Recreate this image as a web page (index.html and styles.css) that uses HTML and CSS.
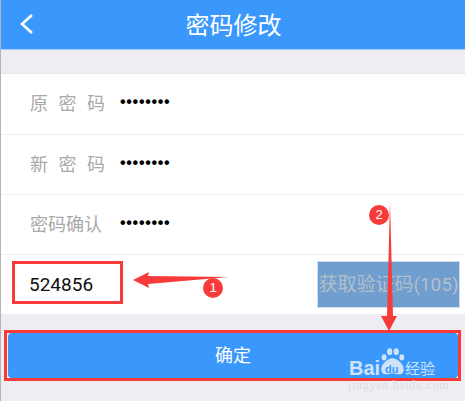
FILE: index.html
```html
<!DOCTYPE html>
<html lang="zh-CN">
<head>
  <meta charset="UTF-8">
  <title>密码修改</title>
  <link rel="stylesheet" href="styles.css">
</head>
<body>

  <div class="page">
    <div class="header">
      <svg class="back" width="16" height="22" viewBox="0 0 16 22">
        <path d="M13 2 L3 11 L13 20" fill="none" stroke="#fff" stroke-width="2.6"/>
      </svg>
      <h1>密码修改</h1>
    </div>

    <div class="form">
      <div class="row">
        <span class="label spaced">原密码</span>
        <span class="dots">••••••••</span>
      </div>
      <div class="row">
        <span class="label spaced">新密码</span>
        <span class="dots">••••••••</span>
      </div>
      <div class="row">
        <span class="label">密码确认</span>
        <span class="dots">••••••••</span>
      </div>
      <div class="row code-row">
        <span class="code">524856</span>
        <button class="get-code">获取验证码(105)</button>
      </div>
    </div>

    <button class="submit">确定</button>
  </div>

  <!-- annotations drawn over the screenshot -->
  <div class="mark mark-code"></div>
  <div class="mark mark-submit"></div>

  <svg class="arrows" width="465" height="401" viewBox="0 0 465 401">
    <path d="M133 280 L149 272 L148 276 L229 277 L148 284 L149 288 Z" fill="#f73b3b"/>
    <path d="M390 201 L393 316 L397 316 L389 331 L381 316 L387 316 Z" fill="#f73b3b"/>
  </svg>
  <div class="badge badge-one">1</div>
  <div class="badge badge-two">2</div>

  <div class="watermark">
    <svg class="paw" width="27" height="28" viewBox="0 0 28 30">
      <ellipse cx="5" cy="10" rx="2.6" ry="3.4" fill="#cfe3f8"/>
      <ellipse cx="11" cy="4" rx="2.8" ry="3.6" fill="#cfe3f8"/>
      <ellipse cx="18" cy="4" rx="2.8" ry="3.6" fill="#cfe3f8"/>
      <ellipse cx="24" cy="10" rx="2.6" ry="3.4" fill="#cfe3f8"/>
      <path d="M14 11 C19 11 27 18 26 24 C25 30 18 28 14 27 C10 28 3 30 2 24 C1 18 9 11 14 11 Z" fill="#cfe3f8"/>
    </svg>
    <span class="wm-bai">Bai</span>
    <span class="wm-du">du</span>
    <span class="wm-jy">经验</span>
    <span class="wm-url">jingyan.baidu.com</span>
  </div>

</body>
</html>
```

FILE: styles.css
```css
html, body {
  margin: 0;
  height: 100%;
}
body {
  font-family: "Liberation Sans", "Noto Sans CJK SC", sans-serif;
  background: #eeeef2;
  overflow: hidden;
}
.page {
  height: 401px;
  border-left: 1px solid #b4b4b4;
  box-sizing: border-box;
}
.header {
  height: 49px;
  background: #3a98fd;
  border-bottom: 1px solid #a5cffb;
  display: flex;
  align-items: center;
  justify-content: center;
  padding-left: 1px;
}
.back {
  position: absolute;
  left: 19px;
  top: 13px;
}
h1 {
  margin: 0 0 2px;
  font-size: 24px;
  font-weight: normal;
  color: #fff;
  font-family: "Noto Sans CJK SC", sans-serif;
}
.form {
  margin-top: 23px;
  background: #fff;
  border-top: 1px solid #e9e9ec;
}
.row {
  height: 59px;
  display: flex;
  align-items: center;
  padding-left: 29px;
  border-bottom: 1px solid #efeff1;
}
.row:first-child {
  height: 60px;
}
.label {
  width: 90px;
  padding-bottom: 4px;
  font-size: 18px;
  color: #a9a9a9;
  font-family: "Noto Sans CJK SC", sans-serif;
}
.spaced {
  letter-spacing: 10.5px;
}
.dots {
  margin-bottom: 4px;
  font-size: 16px;
  letter-spacing: 0.7px;
  color: #000;
  font-weight: bold;
}
.code-row {
  justify-content: space-between;
  padding-right: 5px;
}
.code {
  margin-left: -1px;
  font-family: Roboto, sans-serif;
  font-size: 19px;
  color: #111;
}
.get-code {
  width: 143px;
  height: 47px;
  padding: 0 0 4px;
  border: 1px solid #cfdcea;
  background: #6f9ecf;
  color: #b5bfca;
  font-family: Roboto, "Noto Sans CJK SC", sans-serif;
  font-size: 19px;
  white-space: nowrap;
}
.submit {
  display: block;
  width: 450px;
  height: 45px;
  margin: 18px 0 0 7px;
  padding: 0 0 4px;
  border: 0;
  border-radius: 4px;
  background: #3a98fd;
  color: #fff;
  font-size: 18px;
  font-family: "Noto Sans CJK SC", sans-serif;
}
.mark {
  position: absolute;
  border: 3px solid #f73b3b;
  box-sizing: border-box;
}
.mark-code {
  left: 12px;
  top: 261px;
  width: 111px;
  height: 43px;
}
.mark-submit {
  left: 4px;
  top: 330px;
  width: 457px;
  height: 51px;
}
.arrows {
  position: absolute;
  left: 0;
  top: 0;
}
.badge {
  position: absolute;
  width: 20px;
  height: 20px;
  border-radius: 50%;
  background: #f73b3b;
  color: #fff;
  font-size: 13px;
  line-height: 20px;
  text-align: center;
}
.badge-one {
  left: 203px;
  top: 278px;
}
.badge-two {
  left: 369px;
  top: 205px;
}
.watermark {
  position: absolute;
  left: 348px;
  top: 347px;
  width: 110px;
  height: 46px;
  color: #cfe3f8;
}
.paw {
  position: absolute;
  left: 31px;
  top: 1px;
}
.wm-bai {
  position: absolute;
  left: 1px;
  top: 10px;
  font-size: 20px;
  font-weight: bold;
}
.wm-du {
  position: absolute;
  left: 37px;
  top: 16px;
  font-size: 11px;
  font-weight: bold;
  color: #3a98fd;
}
.wm-jy {
  position: absolute;
  left: 57px;
  top: 12px;
  font-size: 15px;
  line-height: 20px;
}
.wm-url {
  position: absolute;
  left: 0;
  top: 31px;
  font-size: 12px;
  font-family: "Liberation Serif", serif;
  letter-spacing: 0.7px;
  color: #dcdce2;
}
```
